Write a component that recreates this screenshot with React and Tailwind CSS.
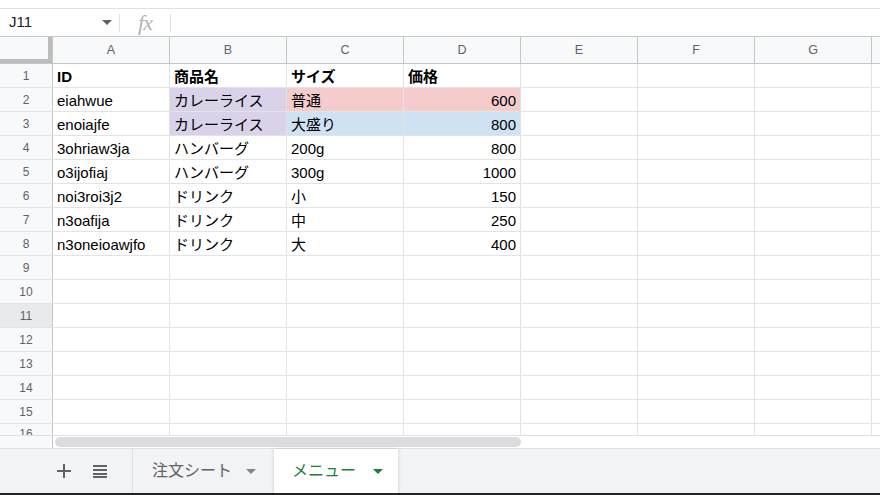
import React from 'react'

const COLS = ['A', 'B', 'C', 'D', 'E', 'F', 'G']

const PURPLE = 'bg-[#d9d2e9]'
const PINK = 'bg-[#f4cccc]'
const BLUE = 'bg-[#cfe2f3]'

const rows = [
  [{ v: 'ID', b: true }, { v: '商品名', b: true }, { v: 'サイズ', b: true }, { v: '価格', b: true }],
  [{ v: 'eiahwue' }, { v: 'カレーライス', bg: PURPLE }, { v: '普通', bg: PINK }, { v: '600', r: true, bg: PINK }],
  [{ v: 'enoiajfe' }, { v: 'カレーライス', bg: PURPLE }, { v: '大盛り', bg: BLUE }, { v: '800', r: true, bg: BLUE }],
  [{ v: '3ohriaw3ja' }, { v: 'ハンバーグ' }, { v: '200g' }, { v: '800', r: true }],
  [{ v: 'o3ijofiaj' }, { v: 'ハンバーグ' }, { v: '300g' }, { v: '1000', r: true }],
  [{ v: 'noi3roi3j2' }, { v: 'ドリンク' }, { v: '小' }, { v: '150', r: true }],
  [{ v: 'n3oafija' }, { v: 'ドリンク' }, { v: '中' }, { v: '250', r: true }],
  [{ v: 'n3oneioawjfo' }, { v: 'ドリンク' }, { v: '大' }, { v: '400', r: true }],
]

const font = { fontFamily: '"Liberation Sans", Arial, "Noto Sans CJK JP", sans-serif' }

function Caret({ className }) {
  return (
    <svg viewBox="0 0 10 5" width="10" height="5" className={className}>
      <path d="M0 0 L10 0 L5 5 Z" fill="currentColor" />
    </svg>
  )
}

function Row({ n, data = [], selected, h = 'h-6' }) {
  return (
    <div className={`flex ${h} border-b border-[#e2e3e3] shrink-0`}>
      <div
        className={`w-[53px] shrink-0 border-r border-[#c4c7c5] flex items-center justify-center text-[12px] text-[#5f6368] ${
          selected ? 'bg-[#e8eaed]' : 'bg-[#f8f9fa]'
        }`}
      >
        {n}
      </div>
      {COLS.map((c, i) => {
        const cell = data[i] || {}
        return (
          <div
            key={c}
            className={`w-[117px] shrink-0 border-r border-[#e2e3e3] flex items-center pt-[3px] px-[4px] text-[15px] text-black ${
              cell.r ? 'justify-end' : ''
            } ${cell.b ? 'font-bold' : ''} ${cell.bg || ''}`}
          >
            {cell.v}
          </div>
        )
      })}
      <div className="flex-1" />
    </div>
  )
}

export default function App() {
  return (
    <div className="w-[880px] h-[495px] bg-white flex flex-col overflow-hidden" style={font}>
      <div className="h-2 border-b border-[#e0e0e0] shrink-0 box-content" />

      {/* formula bar */}
      <div className="h-[28px] shrink-0 flex items-center border-b border-[#c4c7c5]">
        <div className="w-[119px] flex items-center justify-between pl-[9px] pr-[7px] text-[15px] text-[#202124]">
          <span>J11</span>
          <Caret className="text-[#5f6368]" />
        </div>
        <div className="w-px h-[18px] bg-[#e0e0e0]" />
        <div className="w-[50px] flex items-center justify-center">
          <span className="text-[22px] italic text-[#b0b3b7] tracking-[-1px]" style={{ fontFamily: '"Liberation Serif", serif' }}>
            fx
          </span>
        </div>
        <div className="w-px h-[18px] bg-[#e0e0e0]" />
      </div>

      {/* column header */}
      <div className="flex h-[27px] shrink-0 border-b border-[#c4c7c5] bg-[#f8f9fa]">
        <div className="w-[53px] shrink-0 border-r border-[#c4c7c5] flex flex-col">
          <div className="flex-1 flex">
            <div className="flex-1" />
            <div className="w-[4px] bg-[#bdbdbd]" />
          </div>
          <div className="h-[4px] bg-[#bdbdbd]" />
        </div>
        {COLS.map((c) => (
          <div
            key={c}
            className="w-[117px] shrink-0 border-r border-[#c4c7c5] flex items-center justify-center text-[12.5px] text-[#5f6368]"
          >
            {c}
          </div>
        ))}
        <div className="flex-1" />
      </div>

      {/* grid */}
      {Array.from({ length: 15 }, (_, i) => (
        <Row key={i} n={i + 1} data={rows[i]} selected={i + 1 === 11} />
      ))}
      <div className="flex h-[12px] shrink-0 border-b border-[#e0e0e0] overflow-hidden">
        <div className="w-[53px] shrink-0 border-r border-[#c4c7c5] bg-[#f8f9fa] flex justify-center pt-[4px] text-[12px] text-[#5f6368] leading-none">
          16
        </div>
        {COLS.map((c) => (
          <div key={c} className="w-[117px] shrink-0 border-r border-[#e2e3e3]" />
        ))}
      </div>

      {/* horizontal scrollbar */}
      <div className="flex h-[12px] shrink-0">
        <div className="w-[53px] shrink-0 border-r border-[#c4c7c5] bg-[#f8f9fa]" />
        <div className="flex-1 flex items-center pl-[2px]">
          <div className="w-[466px] h-[10px] rounded-full bg-[#dadce0]" />
        </div>
      </div>

      {/* sheet tabs */}
      <div className="flex-1 flex bg-[#f1f3f4] border-t border-[#e0e0e0] border-b-2 border-b-[#202124]">
        <div className="w-[133px] shrink-0 flex items-center border-r border-[#e0e0e0]">
          <svg viewBox="0 0 14 14" width="14" height="14" className="ml-[57px] text-[#5f6368]">
            <path d="M6 0h2v6h6v2H8v6H6V8H0V6h6z" fill="currentColor" />
          </svg>
          <svg viewBox="0 0 14 14" width="14" height="14" className="ml-[22px] text-[#5f6368]">
            <path d="M0 1h14v2H0zM0 5h14v2H0zM0 9h14v2H0zM0 12h14v2H0z" fill="currentColor" />
          </svg>
        </div>
        <div className="w-[141px] shrink-0 flex items-center pl-[19px] gap-[14px] text-[16px] text-[#5f6368]">
          <span>注文シート</span>
          <Caret className="text-[#80868b]" />
        </div>
        <div className="w-[124px] shrink-0 flex items-center pl-[18px] gap-[17px] bg-white text-[16px] text-[#188038] shadow-[0_0_3px_rgba(60,64,67,0.25)]">
          <span>メニュー</span>
          <Caret className="text-[#188038]" />
        </div>
        <div className="flex-1" />
      </div>
    </div>
  )
}
